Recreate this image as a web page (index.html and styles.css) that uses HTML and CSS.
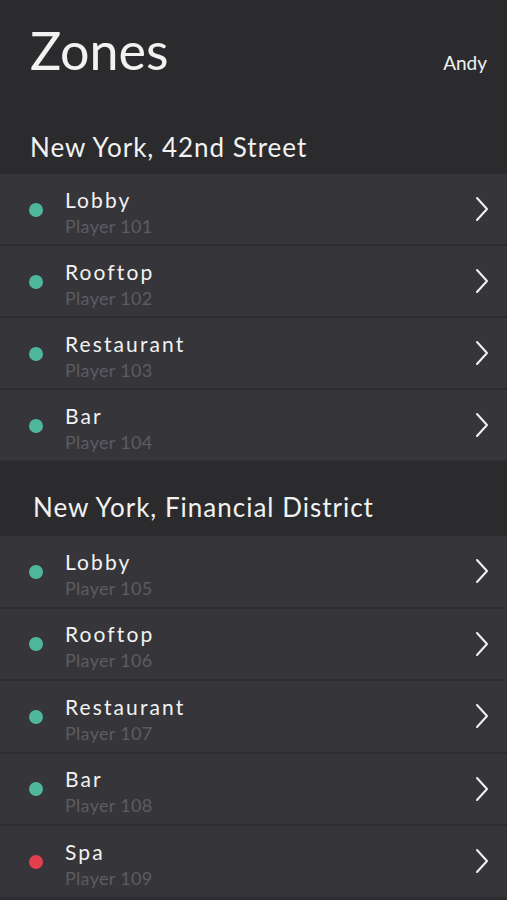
FILE: index.html
```html
<!DOCTYPE html>
<html>
<head>
<meta charset="utf-8">
<link rel="stylesheet" href="styles.css">
</head>
<body>
<div class="app">
  <header class="topbar">
    <h1 class="title">Zones</h1>
    <span class="user">Andy</span>
  </header>

  <section class="group">
    <h2 class="group-title">New York, 42nd Street</h2>
    <ul class="list">
      <li class="row"><span class="dot on"></span><div class="info"><div class="name">Lobby</div><div class="sub">Player 101</div></div><svg class="chev" viewBox="0 0 14 26"><path d="M2 2 L12 13 L2 24"/></svg></li>
      <li class="row"><span class="dot on"></span><div class="info"><div class="name">Rooftop</div><div class="sub">Player 102</div></div><svg class="chev" viewBox="0 0 14 26"><path d="M2 2 L12 13 L2 24"/></svg></li>
      <li class="row"><span class="dot on"></span><div class="info"><div class="name">Restaurant</div><div class="sub">Player 103</div></div><svg class="chev" viewBox="0 0 14 26"><path d="M2 2 L12 13 L2 24"/></svg></li>
      <li class="row"><span class="dot on"></span><div class="info"><div class="name">Bar</div><div class="sub">Player 104</div></div><svg class="chev" viewBox="0 0 14 26"><path d="M2 2 L12 13 L2 24"/></svg></li>
    </ul>
  </section>

  <section class="group">
    <h2 class="group-title second">New York, Financial District</h2>
    <ul class="list wide">
      <li class="row"><span class="dot on"></span><div class="info"><div class="name">Lobby</div><div class="sub">Player 105</div></div><svg class="chev" viewBox="0 0 14 26"><path d="M2 2 L12 13 L2 24"/></svg></li>
      <li class="row"><span class="dot on"></span><div class="info"><div class="name">Rooftop</div><div class="sub">Player 106</div></div><svg class="chev" viewBox="0 0 14 26"><path d="M2 2 L12 13 L2 24"/></svg></li>
      <li class="row"><span class="dot on"></span><div class="info"><div class="name">Restaurant</div><div class="sub">Player 107</div></div><svg class="chev" viewBox="0 0 14 26"><path d="M2 2 L12 13 L2 24"/></svg></li>
      <li class="row"><span class="dot on"></span><div class="info"><div class="name">Bar</div><div class="sub">Player 108</div></div><svg class="chev" viewBox="0 0 14 26"><path d="M2 2 L12 13 L2 24"/></svg></li>
      <li class="row"><span class="dot off"></span><div class="info"><div class="name">Spa</div><div class="sub">Player 109</div></div><svg class="chev" viewBox="0 0 14 26"><path d="M2 2 L12 13 L2 24"/></svg></li>
    </ul>
  </section>
</div>
</body>
</html>
```
FILE: styles.css
```css
* { box-sizing: border-box; }
html, body {
  margin: 0;
  padding: 0;
  background: #2b2b2e;
  color: #f2f2f2;
  font-family: Lato, "Open Sans", "Liberation Sans", sans-serif;
}
.app {
  width: 507px;
  overflow: hidden;
}
.topbar {
  display: flex;
  justify-content: space-between;
  align-items: baseline;
  padding: 20px 20px 0 30px;
}
.title {
  margin: 0;
  font-size: 52px;
  line-height: 60px;
  font-weight: 400;
  letter-spacing: 0;
}
.user {
  font-size: 19px;
  font-weight: 400;
  letter-spacing: 0;
}
.group-title {
  margin: 0;
  font-size: 26px;
  line-height: 30px;
  font-weight: 400;
  letter-spacing: 1px;
  padding: 52px 0 12px 30px;
}
.group-title.second {
  padding: 30px 0 14px 33px;
}
.list {
  list-style: none;
  margin: 0;
  padding: 0;
}
.row {
  display: flex;
  align-items: center;
  height: 72px;
  padding: 0 18px 0 29px;
  background: #36353a;
  border-bottom: 2px solid #2e2d31;
}
.list.wide .row {
  height: 72.5px;
}
.dot {
  width: 14px;
  height: 14px;
  border-radius: 50%;
  flex: none;
  margin-top: 1px;
}
.dot.on { background: #4fb79b; }
.dot.off { background: #e2404f; }
.info {
  flex: 1;
  margin-left: 22px;
  padding-top: 5px;
}
.name {
  font-size: 21px;
  line-height: 26px;
  letter-spacing: 2.1px;
}
.sub {
  font-size: 18px;
  line-height: 22px;
  margin-top: 2px;
  color: #5c5c61;
  letter-spacing: 0.3px;
}
.chev {
  width: 14px;
  height: 26px;
  flex: none;
}
.chev path {
  fill: none;
  stroke: #f2f2f2;
  stroke-width: 2;
  stroke-linecap: round;
  stroke-linejoin: round;
}
```
